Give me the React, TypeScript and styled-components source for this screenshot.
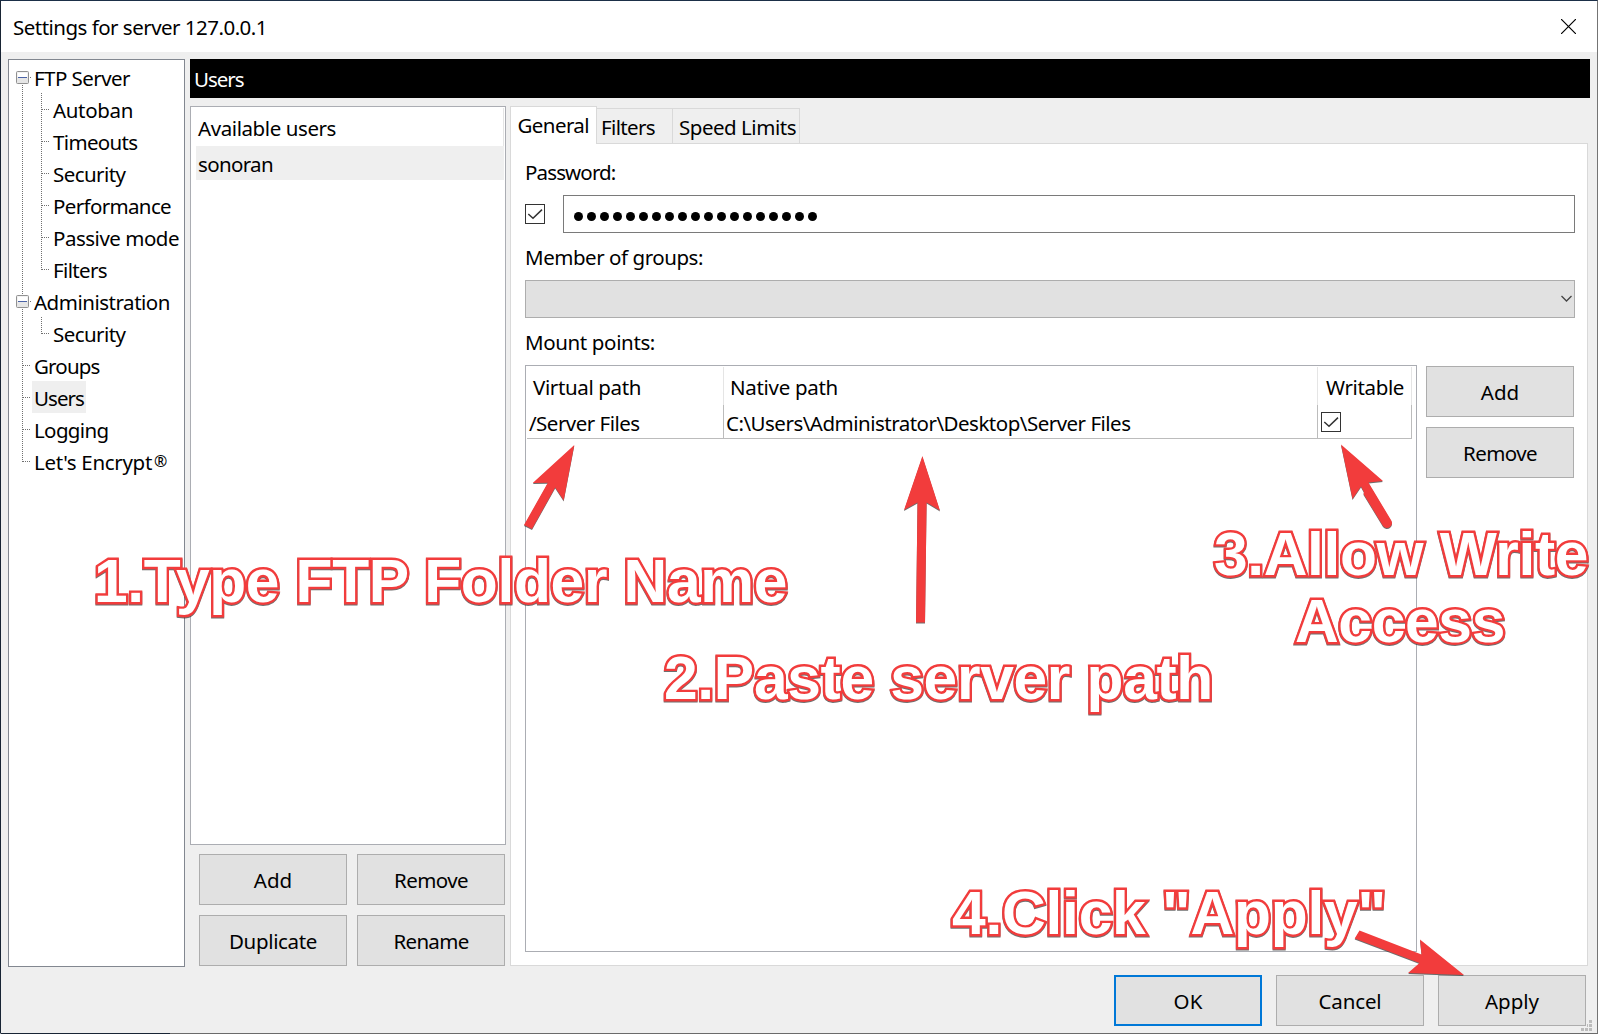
import React, { useLayoutEffect, useRef, useState } from "react";
import styled, { createGlobalStyle } from "styled-components";

const UI_FONT = '"Noto Sans", "Open Sans", sans-serif';
const CALLOUT_FONT = '"Liberation Sans", Arial, sans-serif';

const GlobalStyle = createGlobalStyle`
  * { box-sizing: border-box; }
  body { margin: 0; background: #efefef; font-family: ${UI_FONT}; font-size: 20.5px; color: #000; }
`;

const TextRun = styled.span`
  display: inline-block;
  white-space: pre;
`;

/* Text whose tracking is adjusted so that the run takes exactly `w` pixels. */
function Fit({ w, children }: { w: number; children: string }) {
  const ref = useRef<HTMLSpanElement>(null);
  const [spacing, setSpacing] = useState(0);
  useLayoutEffect(() => {
    const el = ref.current;
    if (!el) return;
    const natural = el.getBoundingClientRect().width;
    setSpacing((w - natural) / children.length);
  }, [w, children]);
  return (
    <TextRun ref={ref} style={{ letterSpacing: spacing }}>
      {children}
    </TextRun>
  );
}

const Window = styled.div`
  position: relative;
  display: flex;
  flex-direction: column;
  width: 1598px;
  height: 1034px;
  overflow: hidden;
  background: linear-gradient(90deg, #182434 170px, #6a6a6a 170px) bottom / 100% 1px no-repeat border-box, #efefef;
  border-style: solid;
  border-width: 1px;
  border-color: #1b2f48 #747474 transparent #182434;
`;

const TitleBar = styled.header`
  display: flex;
  justify-content: space-between;
  align-items: center;
  height: 51px;
  flex: none;
  padding: 0 21px 0 12px;
  background: #fff;
`;

const CloseButton = styled.button`
  display: flex;
  padding: 0;
  border: 0;
  background: none;
`;

const Body = styled.div`
  display: flex;
  gap: 5px;
  flex: none;
  height: 915px;
  padding: 7px 7px 0;
`;

const Tree = styled.nav`
  width: 177px;
  height: 908px;
  flex: none;
  padding: 1px 0;
  background: #fff;
  border: 1px solid #828790;
`;

const TreeRow = styled.div`
  display: flex;
  height: 32px;
`;

const RowGuides = styled.svg`
  flex: none;
  display: block;
`;

const TreeLabel = styled.span<{ $selected?: boolean }>`
  display: flex;
  align-items: center;
  height: 32px;
  padding: 2px 2px 0 2px;
  line-height: 30px;
  background: ${(p) => (p.$selected ? "#efefef" : "transparent")};
`;

const Mark = styled.span`
  margin: -3px 0 0 2px;
  font-size: 16px;
`;

const Main = styled.main`
  display: flex;
  flex-direction: column;
  gap: 8px;
  width: 1400px;
`;

const Banner = styled.h1`
  display: flex;
  align-items: center;
  height: 39px;
  margin: 0;
  padding: 1px 0 0 4px;
  font: inherit;
  color: #fff;
  background: #000;
`;

const Columns = styled.div`
  display: flex;
  gap: 4px;
`;

const UserColumn = styled.section`
  display: flex;
  flex-direction: column;
  width: 316px;
`;

const UserList = styled.div`
  height: 739px;
  padding: 1px 1px 0 5px;
  background: #fff;
  border: 1px solid #abadb3;
`;

const ListHeader = styled.div`
  display: flex;
  align-items: center;
  height: 38px;
  padding: 1px 0 0 2px;
  border-right: 1px solid #e5e5e5;
`;

const ListItem = styled.div`
  display: flex;
  align-items: center;
  height: 34px;
  padding: 1px 0 0 2px;
  background: #efefef;
`;

const ButtonGrid = styled.div`
  display: grid;
  grid-template-columns: 148px 148px;
  gap: 10px;
  padding: 9px 0 0 9px;
`;

const Button = styled.button<{ $primary?: boolean }>`
  display: flex;
  align-items: center;
  justify-content: center;
  width: 148px;
  height: 51px;
  padding: 1px 0 0;
  font: inherit;
  color: #000;
  background: #e1e1e1;
  border: ${(p) => (p.$primary ? "2px solid #0078d7" : "1px solid #adadad")};
`;

const Notebook = styled.section`
  display: flex;
  flex-direction: column;
  width: 1078px;
  height: 860px;
`;

const Tabs = styled.div`
  display: flex;
  align-items: flex-end;
  height: 37px;
`;

const Tab = styled.div<{ $active?: boolean; $w: number; $pad: number }>`
  display: flex;
  align-items: center;
  position: relative;
  z-index: ${(p) => (p.$active ? 1 : 0)};
  width: ${(p) => p.$w}px;
  height: ${(p) => (p.$active ? 38 : 35)}px;
  margin-bottom: ${(p) => (p.$active ? -1 : 0)}px;
  padding: ${(p) => (p.$active ? 0 : 2)}px 0 ${(p) => (p.$active ? 1 : 0)}px ${(p) => p.$pad}px;
  background: ${(p) => (p.$active ? "#fff" : "#efefef")};
  border: 1px solid #d9d9d9;
  border-bottom: 0;
  border-left-width: ${(p) => (p.$active ? 1 : 0)}px;
`;

const Page = styled.div`
  display: flex;
  flex-direction: column;
  height: 823px;
  padding: 12px 12px 0 14px;
  background: #fff;
  border: 1px solid #d9d9d9;
`;

const FieldLabel = styled.label`
  display: flex;
  align-items: center;
  height: 32px;
`;

const PasswordRow = styled.div`
  display: flex;
  align-items: center;
  gap: 18px;
  height: 38px;
  margin: 7px 0 8px;
`;

const Box = styled.span`
  display: flex;
  flex: none;
  width: 20px;
  height: 20px;
  background: #fff;
  border: 1px solid #333;
`;

const PasswordInput = styled.div`
  display: flex;
  align-items: center;
  flex: 1;
  height: 38px;
  padding: 0 0 0 8px;
  background: #fff;
  border: 1px solid #7a7a7a;
`;

const Dot = styled.span`
  width: 9.4px;
  height: 9.4px;
  margin: 5px 1.8px 0;
  border-radius: 50%;
  background: #000;
`;

const Combo = styled.div`
  display: flex;
  align-items: center;
  justify-content: flex-end;
  height: 38px;
  margin: 7px 0 8px;
  padding-right: 2px;
  background: #e1e1e1;
  border: 1px solid #adadad;
`;

const MountRow = styled.div`
  display: flex;
  gap: 9px;
  margin-top: 7px;
`;

const MountTable = styled.div`
  width: 892px;
  height: 587px;
  padding: 1px 4px 0 1px;
  background: #fff;
  border: 1px solid #abadb3;
`;

const TableRow = styled.div<{ $head?: boolean }>`
  display: grid;
  grid-template-columns: 197px 594px 94px;
  height: ${(p) => (p.$head ? 38 : 34)}px;
  border-bottom: ${(p) => (p.$head ? "0" : "1px solid #bcbcbc")};
`;

const Cell = styled.div<{ $head?: boolean; $pad: number }>`
  display: flex;
  align-items: center;
  padding: ${(p) => (p.$head ? 1 : 2)}px 0 0 ${(p) => p.$pad}px;
  border-right: 1px solid ${(p) => (p.$head ? "#e5e5e5" : "#bcbcbc")};
`;

const CheckCell = styled(Cell)`
  padding-top: 0;
`;

const SideButtons = styled.div`
  display: flex;
  flex-direction: column;
  gap: 10px;
  padding-top: 1px;
`;

const Footer = styled.footer`
  display: flex;
  justify-content: flex-end;
  gap: 14px;
  padding: 8px 11px 0 0;
`;

const Grip = styled.svg`
  position: absolute;
  right: 5px;
  bottom: 2px;
`;

/* Red instruction marks float above the dialog. */
const Arrows = styled.svg`
  position: absolute;
  left: -1px;
  top: -1px;
  filter: drop-shadow(0 1px 0.6px rgba(60, 60, 60, 0.75));
`;

const Callout = styled.div<{ $x: number; $y: number }>`
  position: absolute;
  left: ${(p) => p.$x}px;
  top: ${(p) => p.$y}px;
  font: bold 60.5px/60px ${CALLOUT_FONT};
  color: #fff;
  -webkit-text-stroke: 4.8px #f23c3c;
  paint-order: stroke fill;
  stroke-linejoin: round;
  filter: drop-shadow(0 1.5px 0.7px rgba(50, 50, 50, 0.7));
`;

function Check() {
  return (
    <Box>
      <svg width="18" height="18" viewBox="0 0 18 18" fill="none">
        <path d="M2.3 9 L7 13.3 L16 4.6" stroke="#333" strokeWidth="1.5" />
      </svg>
    </Box>
  );
}

type Node = {
  text: string;
  w: number;
  mark?: string;
  child?: boolean;
  box?: boolean;
  first?: boolean;
  last?: boolean;
  outer?: boolean;
  selected?: boolean;
};

const NODES: Node[] = [
  { text: "FTP Server", w: 96, box: true, first: true, outer: true },
  { text: "Autoban", w: 80, child: true, outer: true },
  { text: "Timeouts", w: 84.5, child: true, outer: true },
  { text: "Security", w: 72.5, child: true, outer: true },
  { text: "Performance", w: 118, child: true, outer: true },
  { text: "Passive mode", w: 126, child: true, outer: true },
  { text: "Filters", w: 54, child: true, last: true, outer: true },
  { text: "Administration", w: 136, box: true, outer: true },
  { text: "Security", w: 72.5, child: true, last: true, outer: true },
  { text: "Groups", w: 65.5, outer: true },
  { text: "Users", w: 50, outer: true, selected: true },
  { text: "Logging", w: 74.5, outer: true },
  { text: "Let's Encrypt", w: 118, mark: "®", last: true },
];

const dotted = { stroke: "#707070", strokeWidth: 1, strokeDasharray: "1 1" };

function TreeNode({ node }: { node: Node }) {
  const width = node.child ? 42 : 23;
  return (
    <TreeRow>
      <RowGuides width={width} height="32">
        <line x1="13.5" x2="13.5" y1={node.first ? 16 : 0} y2={node.outer ? 32 : 17} {...dotted} />
        {node.child && <line x1="32.5" x2="32.5" y1="0" y2={node.last ? 17 : 32} {...dotted} />}
        <line x1={node.child ? 33 : 14} x2={node.child ? 41 : 22} y1="16.5" y2="16.5" {...dotted} />
        {node.box && (
          <g>
            <rect x="5" y="10" width="17" height="13" fill="#fff" stroke="none" />
            <rect x="21" y="16" width="1" height="1" fill="#707070" />
            <rect x="7.5" y="10.5" width="12" height="12" rx="1" fill="#e6e6e6" stroke="#919191" />
            <rect x="8.5" y="11.5" width="10" height="5" fill="#fff" />
            <rect x="9" y="16" width="9" height="1" fill="#4b63a7" />
          </g>
        )}
      </RowGuides>
      <TreeLabel $selected={node.selected}>
        <Fit w={node.w}>{node.text}</Fit>
        {node.mark && <Mark>{node.mark}</Mark>}
      </TreeLabel>
    </TreeRow>
  );
}

const CALLOUTS = [
  { text: "1.Type FTP Folder Name", x: 93, base: 601.5, w: 693 },
  { text: "2.Paste server path", x: 663, base: 698, w: 549 },
  { text: "3.Allow Write", x: 1213, base: 574.5, w: 374 },
  { text: "Access", x: 1294, base: 641.5, w: 210 },
  { text: '4.Click "Apply"', x: 951, base: 933, w: 434 },
];

export default function App() {
  return (
    <>
      <GlobalStyle />
      <Window>
        <TitleBar>
          <Fit w={254}>Settings for server 127.0.0.1</Fit>
          <CloseButton>
            <svg width="15" height="15" viewBox="0 0 15 15">
              <path d="M0 0 L15 15 M15 0 L0 15" stroke="#000" strokeWidth="1.2" />
            </svg>
          </CloseButton>
        </TitleBar>
        <Body>
          <Tree>
            {NODES.map((n, i) => (
              <TreeNode key={i} node={n} />
            ))}
          </Tree>
          <Main>
            <Banner>
              <Fit w={49.5}>Users</Fit>
            </Banner>
            <Columns>
              <UserColumn>
                <UserList>
                  <ListHeader>
                    <Fit w={138}>Available users</Fit>
                  </ListHeader>
                  <ListItem>
                    <Fit w={75}>sonoran</Fit>
                  </ListItem>
                </UserList>
                <ButtonGrid>
                  <Button><Fit w={38.5}>Add</Fit></Button>
                  <Button><Fit w={74}>Remove</Fit></Button>
                  <Button><Fit w={88}>Duplicate</Fit></Button>
                  <Button><Fit w={75}>Rename</Fit></Button>
                </ButtonGrid>
              </UserColumn>
              <Notebook>
                <Tabs>
                  <Tab $active $w={87} $pad={6.5}><Fit w={71.5}>General</Fit></Tab>
                  <Tab $w={76} $pad={4}><Fit w={54}>Filters</Fit></Tab>
                  <Tab $w={127} $pad={6}><Fit w={117}>Speed Limits</Fit></Tab>
                </Tabs>
                <Page>
                  <FieldLabel><Fit w={90.5}>Password:</Fit></FieldLabel>
                  <PasswordRow>
                    <Check />
                    <PasswordInput>
                      {Array.from({ length: 19 }, (_, i) => (
                        <Dot key={i} />
                      ))}
                    </PasswordInput>
                  </PasswordRow>
                  <FieldLabel><Fit w={178}>Member of groups:</Fit></FieldLabel>
                  <Combo>
                    <svg width="11" height="8" viewBox="0 0 11 8" fill="none">
                      <path d="M0.5 1 L5.5 6 L10.5 1" stroke="#444" strokeWidth="1.3" />
                    </svg>
                  </Combo>
                  <FieldLabel><Fit w={130}>Mount points:</Fit></FieldLabel>
                  <MountRow>
                    <MountTable>
                      <TableRow $head>
                        <Cell $head $pad={6}><Fit w={108}>Virtual path</Fit></Cell>
                        <Cell $head $pad={6}><Fit w={108}>Native path</Fit></Cell>
                        <Cell $head $pad={8}><Fit w={78}>Writable</Fit></Cell>
                      </TableRow>
                      <TableRow>
                        <Cell $pad={2}><Fit w={110.5}>/Server Files</Fit></Cell>
                        <Cell $pad={2}><Fit w={404.5}>C:\Users\Administrator\Desktop\Server Files</Fit></Cell>
                        <CheckCell $pad={3}><Check /></CheckCell>
                      </TableRow>
                    </MountTable>
                    <SideButtons>
                      <Button><Fit w={38.5}>Add</Fit></Button>
                      <Button><Fit w={74}>Remove</Fit></Button>
                    </SideButtons>
                  </MountRow>
                </Page>
              </Notebook>
            </Columns>
          </Main>
        </Body>
        <Footer>
          <Button $primary><Fit w={29}>OK</Fit></Button>
          <Button><Fit w={63}>Cancel</Fit></Button>
          <Button><Fit w={54}>Apply</Fit></Button>
        </Footer>
        <Grip width="11" height="11" fill="#bcbcbc">
          <rect x="8" y="0" width="3" height="3" />
          <rect x="8" y="4" width="3" height="3" />
          <rect x="8" y="8" width="3" height="3" />
          <rect x="4" y="8" width="3" height="3" />
          <rect x="6" y="4" width="1" height="3" />
          <rect x="0" y="8" width="3" height="3" />
        </Grip>
        <Arrows width="1598" height="1034" fill="#f23c3c">
          <path d="M574.3 445 L532.7 483 L547.8 482.7 L524 525 L532 529 L555.2 487.5 L563.7 500.5 Z" />
          <path d="M922.4 456 L904 510 L917.5 502.5 L916 622.5 L925 622.5 L926.6 502.5 L940 510.5 Z" />
          <path d="M1341 444.5 L1383 481 L1368.5 482.5 L1391 520 A4.8 4.8 0 0 1 1383 526 L1363.5 494 L1364 492 L1361 486.5 L1352.5 499 Z" />
          <path d="M1359.5 930.5 L1354.7 938.5 L1419.5 963 L1408 973 L1464 975 L1420 939.5 L1421.5 954.5 Z" />
        </Arrows>
        {CALLOUTS.map((c) => (
          <Callout key={c.text} $x={c.x} $y={c.base - 51.5}>
            <Fit w={c.w}>{c.text}</Fit>
          </Callout>
        ))}
      </Window>
    </>
  );
}
